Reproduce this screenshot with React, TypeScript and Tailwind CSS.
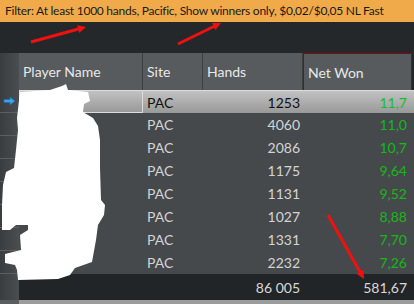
import React from 'react';

const rows = [
  {hands: '1253', won: '11,7'},
  {hands: '4060', won: '11,0'},
  {hands: '2086', won: '10,7'},
  {hands: '1175', won: '9,64'},
  {hands: '1131', won: '9,52'},
  {hands: '1027', won: '8,88'},
  {hands: '1331', won: '7,70'},
  {hands: '2232', won: '7,26'},
];

const cols = 'grid grid-cols-[19px_124px_60px_100px_111px]';

const Arrow = ({x1, y1, x2, y2}: {x1: number; y1: number; x2: number; y2: number}) => {
  const a = Math.atan2(y2 - y1, x2 - x1);
  const l = 9;
  const w = 0.45;
  const p1 = [x2 - l * Math.cos(a - w), y2 - l * Math.sin(a - w)];
  const p2 = [x2 - l * Math.cos(a + w), y2 - l * Math.sin(a + w)];
  return (
    <g>
      <line x1={x1} y1={y1} x2={x2 - 4 * Math.cos(a)} y2={y2 - 4 * Math.sin(a)} stroke="#f01010" strokeWidth="3"/>
      <polygon points={`${x2},${y2} ${p1[0]},${p1[1]} ${p2[0]},${p2[1]}`} fill="#f01010"/>
    </g>
  );
};

const App = () => {
  return (
    <div className="relative w-[414px] h-[304px] overflow-hidden bg-[#25282b] font-['Lato',sans-serif]">
      <div className="h-[22px] bg-[#f0aa4a] text-[#1a1a1a] text-[12px] tracking-[-0.25px] leading-[22px] pl-[5px] whitespace-nowrap">
        Filter: At least 1000 hands, Pacific, Show winners only, $0,02/$0,05 NL Fast
      </div>
      <div className="h-[31px] bg-[#25282b]"/>
      <div className={`${cols} h-[37px] text-[14px] text-[#e8e8e8]`}>
        <div className="bg-gradient-to-r from-[#3a3d40] to-[#4b4e51]"/>
        <div className="bg-[#575b5e] border-r border-[#3d4043] pl-[4px] flex items-center">Player Name</div>
        <div className="bg-[#575b5e] border-r border-[#3d4043] pl-[4px] flex items-center">Site</div>
        <div className="bg-[#575b5e] border-r border-[#3d4043] pl-[4px] flex items-center">Hands</div>
        <div className="bg-[#575b5e] border border-[#7a1010] border-b-0 pl-[4px] mr-[2px] flex items-center">Net Won</div>
      </div>
      {rows.map((r, i) => (
        <div key={i} className={`${cols} h-[23px] text-[14px]`}>
          <div className="bg-gradient-to-r from-[#3a3d40] to-[#4b4e51] border-b border-[#5c5f62] flex items-center justify-center">
            {i === 0 && (
              <svg width="13" height="10" viewBox="0 0 13 10">
                <path d="M1 3.5h6V1l5 4-5 4V6.5H1z" fill="#3ea3e8" stroke="#1c6fb0" strokeWidth="0.8"/>
              </svg>
            )}
          </div>
          {i === 0 ? (
            <>
              <div className="bg-gradient-to-b from-[#c2c2c2] to-[#999999] border border-[#dcdcdc]"/>
              <div className="bg-gradient-to-b from-[#c2c2c2] to-[#999999] border-t border-[#dcdcdc] pl-[4px] text-[#111] flex items-center">PAC</div>
              <div className="bg-gradient-to-b from-[#c2c2c2] to-[#999999] border-t border-[#dcdcdc] pr-[3px] text-[#111] flex items-center justify-end">{r.hands}</div>
              <div className="bg-gradient-to-b from-[#c2c2c2] to-[#999999] border-t border-[#dcdcdc] pr-[7px] text-[#16c016] flex items-center justify-end">{r.won}</div>
            </>
          ) : (
            <>
              <div className="bg-[#45494c]"/>
              <div className="bg-[#45494c] pl-[4px] text-[#d4d4d4] flex items-center">PAC</div>
              <div className="bg-[#45494c] pr-[3px] text-[#d4d4d4] flex items-center justify-end">{r.hands}</div>
              <div className="bg-[#45494c] pr-[7px] text-[#16b816] flex items-center justify-end">{r.won}</div>
            </>
          )}
        </div>
      ))}
      <div className={`${cols} h-[26px] text-[14px] text-[#d8d8d8]`}>
        <div className="bg-gradient-to-r from-[#3a3d40] to-[#4b4e51]"/>
        <div className="bg-[#222528] col-span-3 flex items-center justify-end pr-[3px]">86 005</div>
        <div className="bg-[#222528] flex items-center justify-end pr-[7px]">581,67</div>
      </div>
      <div className="flex h-[4px]">
        <div className="w-[19px] bg-[#5a5d60]"/>
        <div className="flex-1 bg-[#9c9c9c]"/>
      </div>
      <svg className="absolute left-0 top-0 pointer-events-none" width="414" height="304">
        <path d="M20 92 L50 90 L62 86 L66 84 L68 90 L88 92 L90 101 L84 104 L83 112 L93 118 L98 126 L100 140 L100 168 L101 200 L105 205 L104 215 L98 225 L96 240 L92 262 L75 268 L70 275 L58 279 L18 280 L17 270 L15 265 L5 263 L5 254 L21 250 L20 235 L28 230 L28 225 L16 225 L10 230 L2 230 L2 205 L3 185 L6 172 L14 168 L16 150 L18 130 L17 118 Z" fill="#ffffff"/>
        <Arrow x1={31} y1={42} x2={86} y2={27}/>
        <Arrow x1={178} y1={44} x2={221} y2={23}/>
        <Arrow x1={328} y1={215} x2={364} y2={279}/>
      </svg>
    </div>
  );
};

export default App;
